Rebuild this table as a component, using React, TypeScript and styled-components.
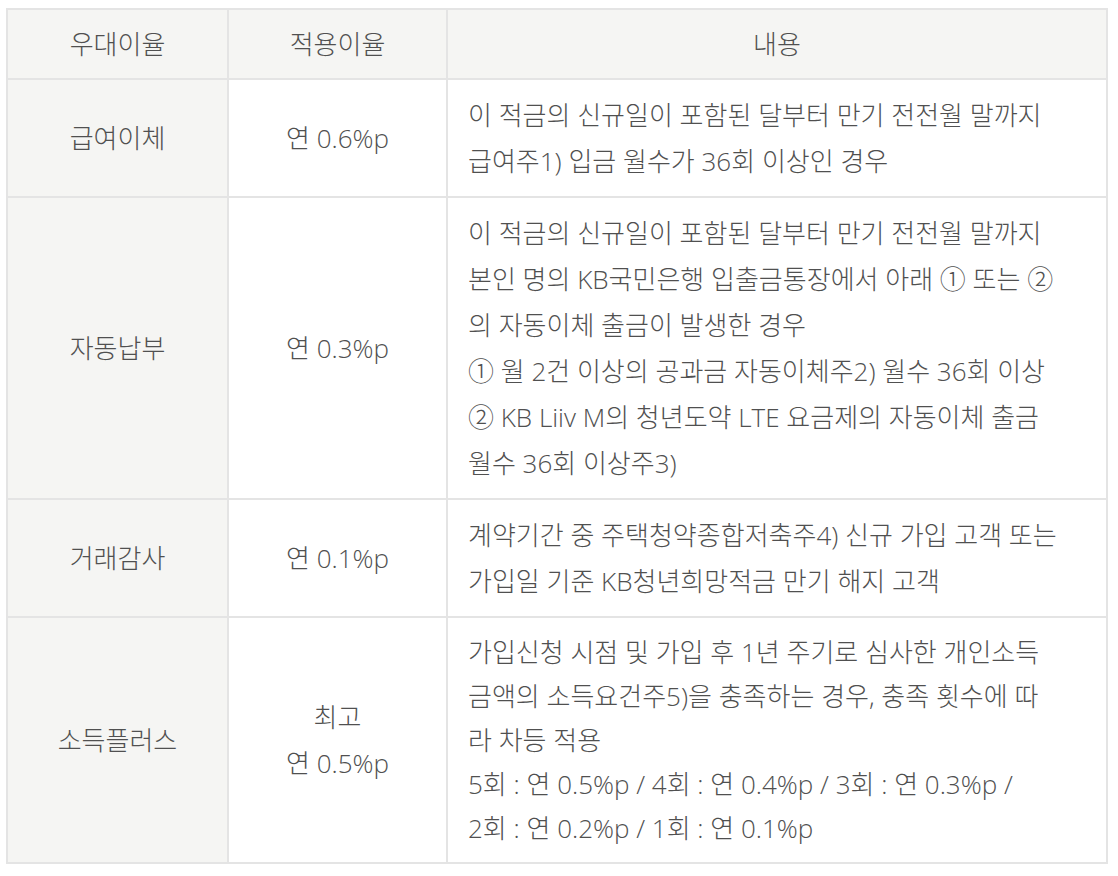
import React from "react";
import styled, { createGlobalStyle } from "styled-components";

const GlobalStyle = createGlobalStyle`
  html, body {
    margin: 0;
    padding: 0;
    background: #ffffff;
  }
  body {
    font-family: "Open Sans", "Noto Sans CJK KR", sans-serif;
  }
`;

const Page = styled.div`
  padding: 8px 12px 14px 6px;
`;

const Table = styled.table`
  width: 1100px;
  border-collapse: collapse;
  table-layout: fixed;
  border: 2px solid #e4e4e4;
  font-family: "Open Sans", "Noto Sans CJK KR", sans-serif;
  font-size: 26px;
  font-weight: 300;
  color: #505050;
  letter-spacing: 0;
`;

const Col = styled.col<{ $w: number }>`
  width: ${(p) => p.$w}px;
`;

const HeadCell = styled.th`
  height: 68px;
  padding: 0;
  background: #f5f5f3;
  border: 2px solid #e4e4e4;
  font-weight: 300;
  text-align: center;
  vertical-align: middle;
  line-height: 46px;
`;

const LabelCell = styled.td`
  padding: 12px 10px;
  background: #f5f5f3;
  border: 2px solid #e4e4e4;
  text-align: center;
  vertical-align: middle;
  line-height: 46px;
`;

const RateCell = styled.td`
  padding: 12px 10px;
  background: #ffffff;
  border: 2px solid #e4e4e4;
  text-align: center;
  vertical-align: middle;
  line-height: 46px;
`;

const DescCell = styled.td<{ $tight?: boolean }>`
  padding: 12px 10px 12px 20px;
  background: #ffffff;
  border: 2px solid #e4e4e4;
  text-align: left;
  vertical-align: middle;
  line-height: ${(p) => (p.$tight ? "44px" : "46px")};
  white-space: nowrap;
`;

type Row = {
  label: string;
  rate: string[];
  lines: string[];
  tight?: boolean;
};

const rows: Row[] = [
  {
    label: "급여이체",
    rate: ["연 0.6%p"],
    lines: [
      "이 적금의 신규일이 포함된 달부터 만기 전전월 말까지",
      "급여주1) 입금 월수가 36회 이상인 경우",
    ],
  },
  {
    label: "자동납부",
    rate: ["연 0.3%p"],
    lines: [
      "이 적금의 신규일이 포함된 달부터 만기 전전월 말까지",
      "본인 명의 KB국민은행 입출금통장에서 아래 ① 또는 ②",
      "의 자동이체 출금이 발생한 경우",
      "① 월 2건 이상의 공과금 자동이체주2) 월수 36회 이상",
      "② KB Liiv M의 청년도약 LTE 요금제의 자동이체 출금",
      "월수 36회 이상주3)",
    ],
  },
  {
    label: "거래감사",
    rate: ["연 0.1%p"],
    lines: [
      "계약기간 중 주택청약종합저축주4) 신규 가입 고객 또는",
      "가입일 기준 KB청년희망적금 만기 해지 고객",
    ],
  },
  {
    label: "소득플러스",
    rate: ["최고", "연 0.5%p"],
    tight: true,
    lines: [
      "가입신청 시점 및 가입 후 1년 주기로 심사한 개인소득",
      "금액의 소득요건주5)을 충족하는 경우, 충족 횟수에 따",
      "라 차등 적용",
      "5회 : 연 0.5%p / 4회 : 연 0.4%p / 3회 : 연 0.3%p /",
      "2회 : 연 0.2%p / 1회 : 연 0.1%p",
    ],
  },
];

const withBreaks = (parts: string[]) =>
  parts.map((t, i) => (
    <React.Fragment key={i}>
      {i > 0 && <br />}
      {t}
    </React.Fragment>
  ));

export default function App() {
  return (
    <>
      <GlobalStyle />
      <Page>
        <Table>
          <colgroup>
            <Col $w={221} />
            <Col $w={219} />
            <Col $w={660} />
          </colgroup>
          <thead>
            <tr>
              <HeadCell>우대이율</HeadCell>
              <HeadCell>적용이율</HeadCell>
              <HeadCell>내용</HeadCell>
            </tr>
          </thead>
          <tbody>
            {rows.map((r) => (
              <tr key={r.label}>
                <LabelCell>{r.label}</LabelCell>
                <RateCell>{withBreaks(r.rate)}</RateCell>
                <DescCell $tight={r.tight}>{withBreaks(r.lines)}</DescCell>
              </tr>
            ))}
          </tbody>
        </Table>
      </Page>
    </>
  );
}
